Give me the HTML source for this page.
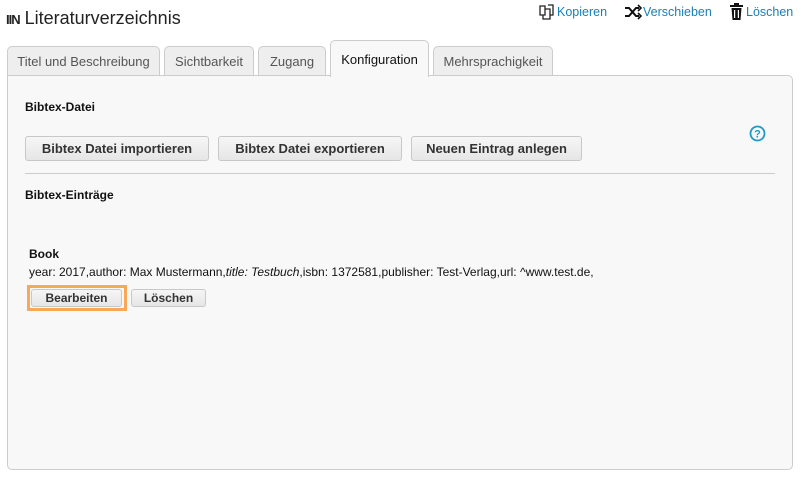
<!DOCTYPE html>
<html><head><meta charset="utf-8"><style>
body{margin:0;width:801px;height:477px;background:#fff;font-family:"Liberation Sans",Arial,sans-serif;position:relative;overflow:hidden}
.a{position:absolute}
.tab{position:absolute;top:46px;height:29px;background:#eee;border:1px solid #ccc;border-bottom:none;border-radius:5px 5px 0 0;color:#555;font-size:13px;line-height:29px;text-align:center;box-sizing:border-box}
.btn{position:absolute;border:1px solid #c8c8c8;border-radius:3px;background:linear-gradient(#f6f6f6,#e6e6e6);font-weight:bold;color:#333;text-align:center;box-sizing:border-box}
.lk{position:absolute;top:5px;font-size:12.5px;color:#1a7fb5}
</style></head><body>
<div class="a" style="left:6px;top:8px;font-size:18px;color:#222"><span style="font-weight:bold;font-size:13px;letter-spacing:-1px">IIN</span> Literaturverzeichnis</div>
<svg class="a" style="left:539px;top:4px" width="16" height="16" viewBox="0 0 16 16" fill="none" stroke="#222" stroke-width="1.3"><path d="M1 2h5v9H1zM6 5h5v10H4v-4"/><path d="M9 1h5v10h-3"/></svg>
<div class="lk" style="left:557px">Kopieren</div>
<svg class="a" style="left:624px;top:4px" width="18" height="16" viewBox="0 0 18 16" fill="none" stroke="#111" stroke-width="2"><path d="M1 4h4l7 8h3M1 12h4l7-8h3"/><path d="M14 1l3 3-3 3M14 9l3 3-3 3" stroke-width="1.6"/></svg>
<div class="lk" style="left:643px">Verschieben</div>
<svg class="a" style="left:730px;top:3px" width="13" height="17" viewBox="0 0 13 17" fill="#111"><rect x="0" y="2" width="13" height="2"/><rect x="4" y="0" width="5" height="2"/><path d="M1.5 5h10l-1 12h-8z"/><rect x="4" y="7" width="1.2" height="8" fill="#fff"/><rect x="7.8" y="7" width="1.2" height="8" fill="#fff"/></svg>
<div class="lk" style="left:746px">Löschen</div>
<div class="a" style="left:7px;top:75px;width:786px;height:395px;background:#f8f8f8;border:1px solid #ccc;border-radius:0 5px 5px 5px;box-sizing:border-box"></div>
<div class="tab" style="left:7px;width:153px">Titel und Beschreibung</div>
<div class="tab" style="left:164px;width:90px">Sichtbarkeit</div>
<div class="tab" style="left:258px;width:68px">Zugang</div>
<div class="tab" style="left:330px;top:40px;height:37px;width:99px;background:#f8f8f8;color:#111;line-height:37px">Konfiguration</div>
<div class="tab" style="left:433px;width:120px">Mehrsprachigkeit</div>
<div class="a" style="left:25px;top:100px;font-size:12px;font-weight:bold;color:#111">Bibtex-Datei</div>
<div class="btn" style="left:25px;top:136px;width:184px;height:25px;line-height:23px;font-size:13px">Bibtex Datei importieren</div>
<div class="btn" style="left:218px;top:136px;width:184px;height:25px;line-height:23px;font-size:13px">Bibtex Datei exportieren</div>
<div class="btn" style="left:411px;top:136px;width:171px;height:25px;line-height:23px;font-size:13px">Neuen Eintrag anlegen</div>
<svg class="a" style="left:749px;top:125px" width="17" height="17" viewBox="0 0 17 17"><circle cx="8.5" cy="8.5" r="7" fill="none" stroke="#1a9bc8" stroke-width="1.8"/><text x="8.5" y="12.5" font-size="11" font-weight="bold" text-anchor="middle" fill="#1a9bc8" font-family="Liberation Sans">?</text></svg>
<div class="a" style="left:25px;top:173px;width:750px;height:1px;background:#ccc"></div>
<div class="a" style="left:25px;top:188px;font-size:12px;font-weight:bold;color:#111">Bibtex-Einträge</div>
<div class="a" style="left:29px;top:247px;font-size:12px;font-weight:bold;color:#111">Book</div>
<div class="a" style="left:29px;top:265px;font-size:12px;color:#111">year: 2017,author: Max Mustermann,<i>title: Testbuch</i>,isbn: 1372581,publisher: Test-Verlag,url: ^www.test.de,</div>
<div class="a" style="left:27px;top:285px;width:100px;height:26px;border:3px solid #f9a859;box-sizing:border-box"></div>
<div class="btn" style="left:31px;top:289px;width:91px;height:18px;line-height:16px;font-size:12px">Bearbeiten</div>
<div class="btn" style="left:131px;top:289px;width:75px;height:18px;line-height:16px;font-size:12px">Löschen</div>
</body></html>
